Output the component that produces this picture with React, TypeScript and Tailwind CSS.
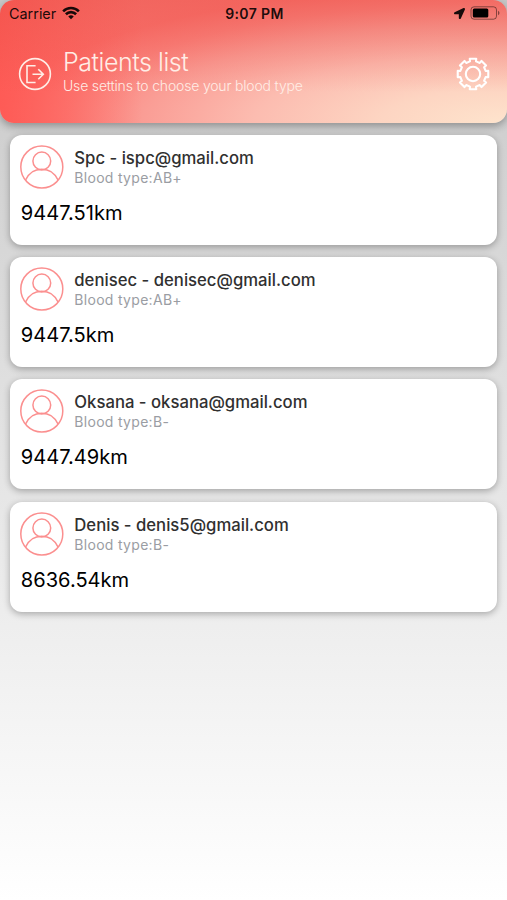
import { FaLocationArrow } from "react-icons/fa";

interface Patient {
  name: string;
  email: string;
  bloodType: string;
  distance: string;
}

const patients: Patient[] = [
  { name: "Spc", email: "ispc@gmail.com", bloodType: "AB+", distance: "9447.51km" },
  { name: "denisec", email: "denisec@gmail.com", bloodType: "AB+", distance: "9447.5km" },
  { name: "Oksana", email: "oksana@gmail.com", bloodType: "B-", distance: "9447.49km" },
  { name: "Denis", email: "denis5@gmail.com", bloodType: "B-", distance: "8636.54km" },
];

// Outline of the settings gear: eight square teeth around the rim
const gearPath = Array.from({ length: 8 }, (_, i) => {
  const base = i * 45 - 90;
  return [[-13.5, 13], [-12, 15.6], [12, 15.6], [13.5, 13]]
    .map(([offset, r]) => {
      const a = ((base + offset) * Math.PI) / 180;
      return `${(17 + r * Math.cos(a)).toFixed(2)} ${(17 + r * Math.sin(a)).toFixed(2)}`;
    })
    .join("L");
}).join("L");

function StatusBar() {
  return (
    <div className="grid h-7 grid-cols-3 items-center pl-[9px] pr-[7px] text-black/90">
      <div className="flex items-center gap-[6px]">
        <span className="text-[14.4px]">Carrier</span>
        <svg className="-mt-[2px] h-[14px] w-[18px]" viewBox="0 0 19 14" fill="none" stroke="currentColor" strokeWidth="2.7">
          <path d="M1.2 5.2a11.8 11.8 0 0 1 16.6 0" />
          <path d="M4.1 8.3a7.6 7.6 0 0 1 10.8 0" />
          <path d="M9.5 13.7 6.6 10.7a4.1 4.1 0 0 1 5.8 0z" fill="currentColor" stroke="none" />
        </svg>
      </div>
      <span className="-mt-px text-center text-[14px] font-semibold tracking-[0.4px]">9:07 PM</span>
      <div className="-mt-[2px] flex items-center justify-end gap-[5px]">
        <FaLocationArrow className="h-[11px] w-[11px]" />
        <svg className="h-[14px] w-[30px]" viewBox="0 0 30 14">
          <rect x="1" y=".8" width="25.5" height="12.4" rx="3" fill="none" stroke="#000" strokeOpacity=".45" />
          <rect x="2.8" y="2.6" width="15.5" height="8.8" rx="1.5" />
          <path d="M28 4.8c2 .8 2 3.6 0 4.4z" fillOpacity=".45" />
        </svg>
      </div>
    </div>
  );
}

function Header() {
  return (
    <header className="h-[123px] rounded-[14px] bg-[linear-gradient(to_bottom,rgba(228,75,65,0.38),rgba(228,75,65,0)_75%),linear-gradient(to_right,rgba(255,85,80,0.8),rgba(255,85,80,0)_28%),radial-gradient(100%_112%_at_100%_100%,#fee4cd_0%,#fdd5c2_25%,#fcbcb0_50%,#fa9d95_72%,#fb827c_87%,#fb736e_100%,#fb7c78_140%)] shadow-[0_3px_9px_rgba(0,0,0,0.32)]">
      <StatusBar />
      <div className="flex items-start pl-[18px] pr-[17px] pt-[20px] text-[#ffede6]">
        <svg className="mt-[9px] h-[34px] w-[34px]" viewBox="0 0 34 34" fill="none" stroke="currentColor" strokeWidth="1.6">
          <circle cx="17" cy="17" r="15.4" />
          <path d="M17.6 8.7H9v16.8h8.6M14.5 17.2h10.7M20.3 12.2l5 5-5 5" />
        </svg>
        <div className="ml-[11px] flex-1">
          <h1 className="text-[25px] leading-[28px] font-light tracking-[-0.45px]">Patients list</h1>
          <p className="text-[14px] leading-[19px] font-light tracking-[-0.18px]">Use settins to choose your blood type</p>
        </div>
        <svg className="mt-[9px] h-[34px] w-[34px] text-white" viewBox="0 0 34 34" fill="none" stroke="currentColor" strokeWidth="2.1" strokeLinejoin="round">
          <path d={`M${gearPath}Z`} />
          <circle cx="17" cy="17" r="7.2" />
        </svg>
      </div>
    </header>
  );
}

function PatientCard({ patient }: { patient: Patient }) {
  return (
    <li className="h-[110px] rounded-[12px] bg-white px-[10px] pt-[10px] shadow-[0_2px_7px_rgba(0,0,0,0.3)]">
      <div className="flex items-start">
        <svg className="h-[44px] w-[44px]" viewBox="0 0 44 44" fill="none" stroke="#fb8f8f" strokeWidth="1.5">
          <circle cx="21.8" cy="22" r="21" />
          <circle cx="21.8" cy="16" r="8.9" />
          <path d="M5.6 35C8.8 28 14.3 24.2 21.8 24.2S34.8 28 38 35" />
        </svg>
        <div className="ml-[10px] pt-[3px]">
          <p className="text-[16.7px] leading-[21px] font-medium text-[#303030]">
            {patient.name} - {patient.email}
          </p>
          <p className="text-[14px] leading-[18px] tracking-[0.3px] text-[#9a9da3]">Blood type:{patient.bloodType}</p>
        </div>
      </div>
      <p className="mt-[10px] pl-[0.5px] text-[20.1px] leading-[28px] text-black">{patient.distance}</p>
    </li>
  );
}

export default function App() {
  return (
    <div className="h-[900px] w-full bg-linear-to-b from-[#c8c8c8] to-white font-['Inter',sans-serif]">
      <Header />
      <ul className="flex flex-col gap-[12.2px] px-[10.3px] pt-[12px]">
        {patients.map((patient) => (
          <PatientCard key={patient.email} patient={patient} />
        ))}
      </ul>
    </div>
  );
}
